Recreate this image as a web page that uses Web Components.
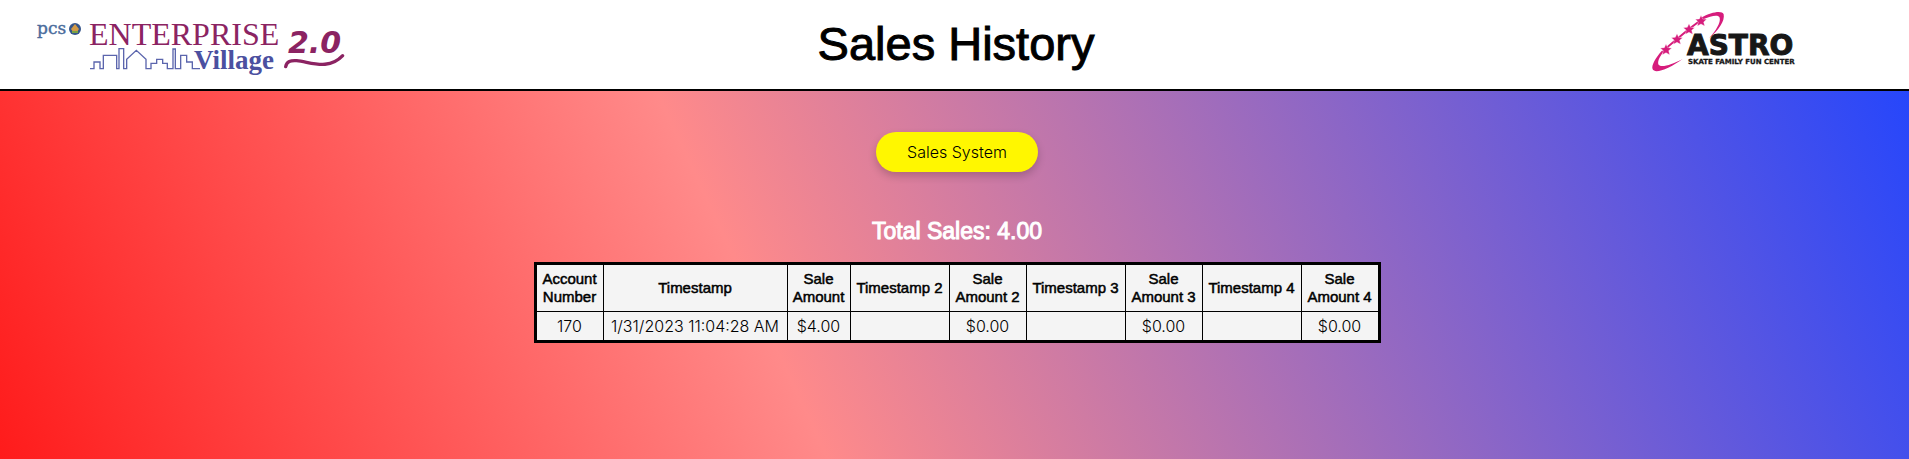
<!DOCTYPE html>
<html lang="en"><head><meta charset="utf-8"><title>Sales History</title>
<style>
html{min-height:100%;background:linear-gradient(65deg,#ff1b1b 0%,#ff8a8a 39%,#1f44ff 100%)}
body{margin:0;font:16px/18px "Liberation Sans",Arial,sans-serif;color:#000}
</style></head><body>
<sales-page></sales-page>
<script>
const define=(name,html)=>customElements.define(name,class extends HTMLElement{
  constructor(){super();this.attachShadow({mode:"open"}).innerHTML=html;}
});
define("village-logo",`<style>:host{display:block}svg{display:block}</style>
<svg width="320" height="73" viewBox="0 0 320 73" role="img" aria-label="Enterprise Village 2.0">
<text x="5" y="26" font-family="DejaVu Serif,serif" font-size="17" fill="#4a6c9c" stroke="#4a6c9c" stroke-width=".4">pcs</text>
<circle cx="43" cy="21" r="6" fill="#35558a"/><path d="M43 16l4 5-2 3h-4l-2-3z" fill="#d39a45"/><path d="M40 23h6v2h-6z" fill="#79a344"/>
<text x="57" y="37" font-family="Liberation Serif,serif" font-size="32" fill="#8b2362">ENTERPRISE</text>
<g transform="translate(-12 -8) scale(.33333)" fill="none">
<path d="M210 206h12v-20h18v20h10v-40h40v40h7v-60h14v60h9v-28l29-27 29 27v28h15v-16h17v-12h18v12h14v16h17v-59h7v59h16v-40h18v20h17v20h23" stroke="#5b65ad" stroke-width="4"/>
<path d="M797 200c3-17 15-19 33-18 42 4 96 30 138-15" stroke="#8b2362" stroke-width="10" stroke-linecap="round"/></g>
<text x="162" y="61" font-family="Liberation Serif,serif" font-weight="700" font-size="27" fill="#4b50a0">Village</text>
<text x="256" y="45" font-family="DejaVu Sans,sans-serif" font-style="italic" font-weight="700" font-size="30" fill="#8b2362">2.0</text>
</svg>`);
define("astro-logo",`<style>:host{display:block}svg{display:block}</style>
<svg width="160" height="73" viewBox="0 0 160 73" role="img" aria-label="Astro Skate Family Fun Center">
<g transform="translate(0 -3) scale(.33333)" fill="#d61c7c">
<path d="M50 138C32 158 18 182 23 193C30 208 75 190 113 162C80 180 45 190 40 178C37 168 45 152 60 135Z"/>
<path d="M168 38C200 20 232 15 236 28C240 48 222 75 192 100C212 78 228 52 224 38C220 28 200 32 172 44Z"/>
<path d="M58 140L70 124L96 102L132 72L168 45" fill="none" stroke="#d61c7c" stroke-width="6"/>
<path id="star" stroke="#fff" stroke-width="1" d="M168 31l5 11 12 1-9 8 3 12-11-6-11 6 3-12-9-8 12-1z"/>
<use href="#star" x="-36" y="25"/><use href="#star" x="-72" y="55"/><use href="#star" x="-105" y="86"/></g>
<text x="42" y="47" font-family="DejaVu Sans,sans-serif" font-weight="700" font-size="28" fill="#171717" stroke="#171717">ASTRO</text>
<text x="43" y="56" font-family="DejaVu Sans,sans-serif" font-weight="700" font-size="7" fill="#171717" stroke="#171717" stroke-width=".3">SKATE FAMILY FUN CENTER</text>
</svg>`);
define("page-header",`<style>
:host{display:grid;grid-template-columns:1fr auto 1fr;align-items:center;height:89px;background:#fff;border-bottom:2px solid #000;padding:0 29px 0 32px}
h1{margin:0;font-size:47px;line-height:54px;padding-bottom:2px;font-weight:400;-webkit-text-stroke:1px #000}
.r{justify-self:end;margin-right:75px}</style><village-logo></village-logo><h1><slot></slot></h1><astro-logo class="r"></astro-logo>`);
define("pill-button",`<style>:host{display:block}button{font:300 16px/20px Inter,sans-serif;padding:10px 0;width:162px;border:0;border-radius:20px;background:#fff700;color:#000;box-shadow:0 4px 8px rgba(0,0,0,.2)}</style><button type="button"><slot></slot></button>`);
define("sales-table",`<style>:host{display:block}
table{border-collapse:collapse;border:3px solid #000;background:#f4f4f4;text-align:center}
th,td{border:1px solid #000;padding:0 4px;box-sizing:border-box}
th{font-size:15px;line-height:18px;font-weight:400;-webkit-text-stroke:.5px #000;height:48px;min-width:63px}td{font:300 16px/18px Inter,sans-serif;height:30px}
.acct{min-width:68px}.time{min-width:99px}.stamp{min-width:184px}.amt{min-width:77px}.last{min-width:78px}</style>
<table><thead><tr><th class="acct">Account<br>Number</th><th class="stamp">Timestamp</th><th>Sale<br>Amount</th><th class="time">Timestamp 2</th><th class="amt">Sale<br>Amount 2</th><th class="time">Timestamp 3</th><th class="amt">Sale<br>Amount 3</th><th class="time">Timestamp 4</th><th class="last">Sale<br>Amount 4</th></tr></thead>
<tbody><tr><td>170</td><td>1/31/2023 11:04:28 AM</td><td>$4.00</td><td></td><td>$0.00</td><td></td><td>$0.00</td><td></td><td>$0.00</td></tr></tbody></table>`);
define("sales-page",`<style>:host{display:block}main{display:flex;flex-direction:column;align-items:center;padding:41px 0 0 5px}
h2{margin:45px 0 17px;font-size:23px;line-height:28px;font-weight:400;-webkit-text-stroke:1px #fff;color:#fff}</style>
<page-header>Sales History</page-header><main><pill-button>Sales System</pill-button><h2>Total Sales: 4.00</h2><sales-table></sales-table></main>`);
</script></body></html>
